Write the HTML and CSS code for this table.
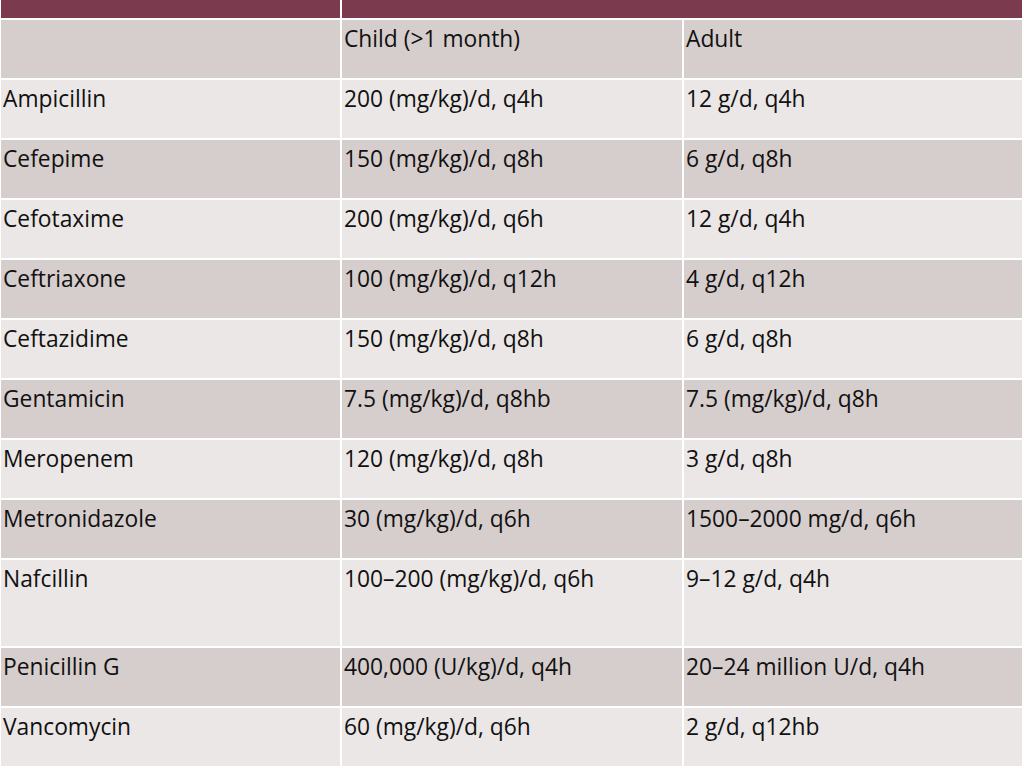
FILE: index.html
```html
<!DOCTYPE html>
<html>
<head>
<meta charset="utf-8">
<link rel="stylesheet" href="styles.css">
</head>
<body>
<table class="dose">
  <colgroup>
    <col class="c1">
    <col class="c2">
    <col class="c3">
  </colgroup>
  <tr class="head"><td></td><td colspan="2"></td></tr>
  <tr class="dark"><td></td><td>Child (&gt;1 month)</td><td>Adult</td></tr>
  <tr class="light"><td>Ampicillin</td><td>200 (mg/kg)/d, q4h</td><td>12 g/d, q4h</td></tr>
  <tr class="dark"><td>Cefepime</td><td>150 (mg/kg)/d, q8h</td><td>6 g/d, q8h</td></tr>
  <tr class="light"><td>Cefotaxime</td><td>200 (mg/kg)/d, q6h</td><td>12 g/d, q4h</td></tr>
  <tr class="dark"><td>Ceftriaxone</td><td>100 (mg/kg)/d, q12h</td><td>4 g/d, q12h</td></tr>
  <tr class="light"><td>Ceftazidime</td><td>150 (mg/kg)/d, q8h</td><td>6 g/d, q8h</td></tr>
  <tr class="dark"><td>Gentamicin</td><td>7.5 (mg/kg)/d, q8hb</td><td>7.5 (mg/kg)/d, q8h</td></tr>
  <tr class="light"><td>Meropenem</td><td>120 (mg/kg)/d, q8h</td><td>3 g/d, q8h</td></tr>
  <tr class="dark"><td>Metronidazole</td><td>30 (mg/kg)/d, q6h</td><td>1500–2000 mg/d, q6h</td></tr>
  <tr class="light tall"><td>Nafcillin</td><td>100–200 (mg/kg)/d, q6h</td><td>9–12 g/d, q4h</td></tr>
  <tr class="dark"><td>Penicillin G</td><td>400,000 (U/kg)/d, q4h</td><td>20–24 million U/d, q4h</td></tr>
  <tr class="light"><td>Vancomycin</td><td>60 (mg/kg)/d, q6h</td><td>2 g/d, q12hb</td></tr>
</table>
</body>
</html>
```
FILE: styles.css
```css
html, body {
  margin: 0;
  padding: 0;
  background: #ffffff;
}
.dose {
  border-collapse: separate;
  border-spacing: 2px;
  margin: -2px 0 0 -1px;
  width: 1025px;
  table-layout: fixed;
  font-family: "Open Sans", "Noto Sans", sans-serif;
  font-size: 22.8px;
  color: #111111;
}
.dose col.c1 { width: 339px; }
.dose col.c2 { width: 340px; }
.dose col.c3 { width: 338px; }
.dose td {
  padding: 4px 2px 0 2px;
  height: 58px;
  box-sizing: border-box;
  vertical-align: top;
  line-height: 30px;
  white-space: nowrap;
}
.dose tr.head td {
  background: #7b3a4d;
  height: 18px;
  padding: 0;
}
.dose tr.dark td { background: #d6cdcd; }
.dose tr.light td { background: #ebe7e6; }
.dose tr.tall td { height: 86px; }
```
